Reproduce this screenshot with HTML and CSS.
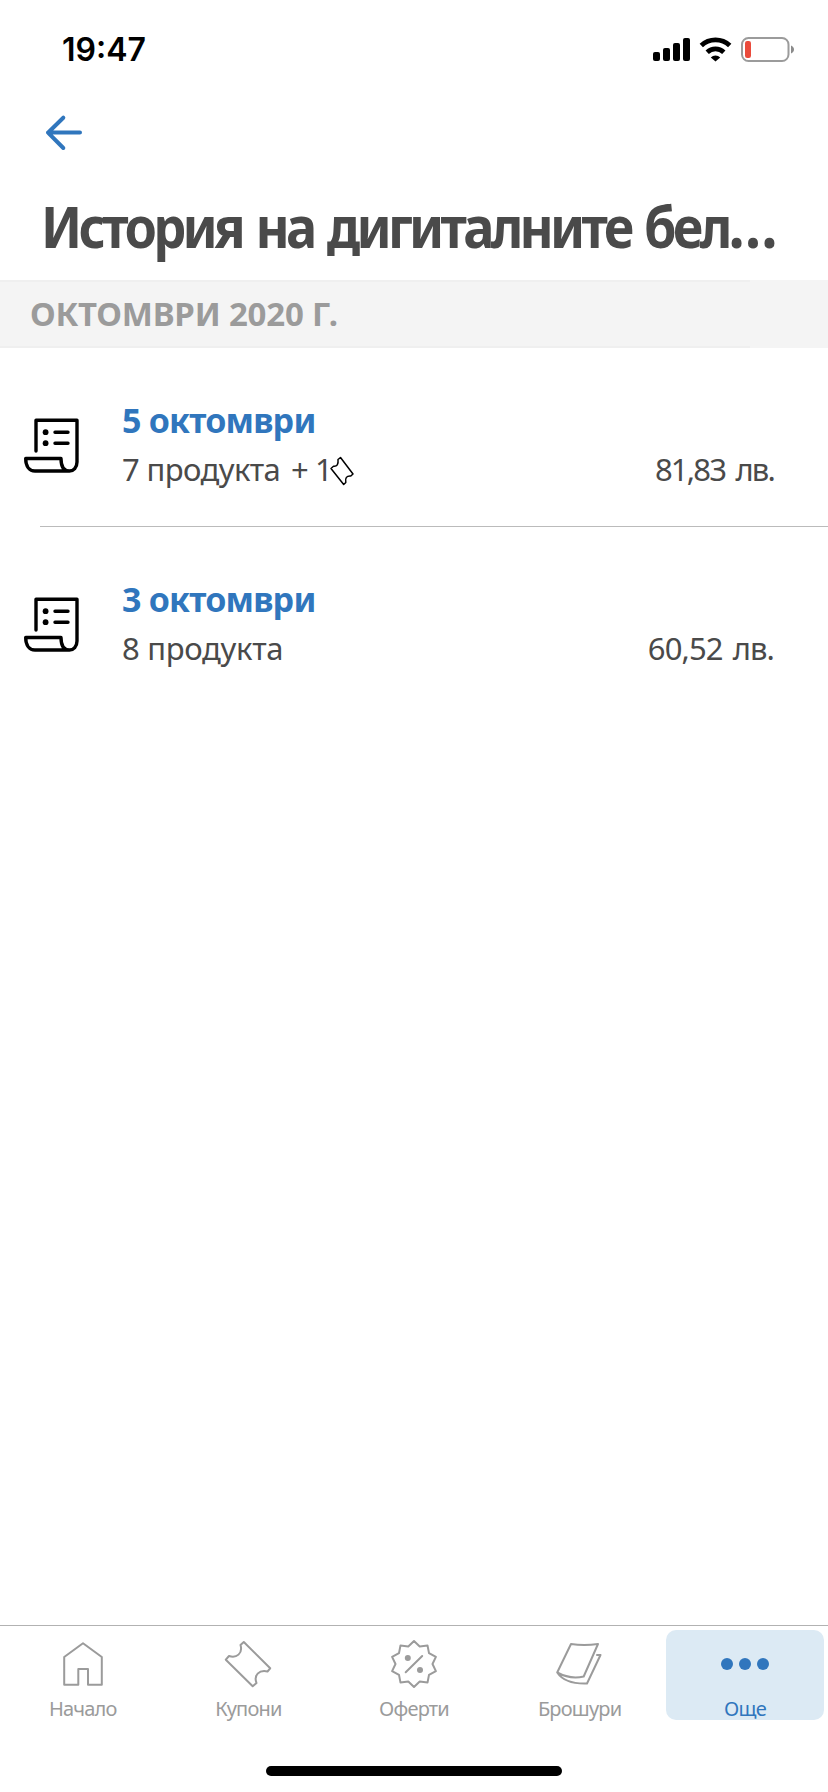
FILE: index.html
```
<!DOCTYPE html>
<html lang="bg">
<head>
<meta charset="utf-8">
<title>История на дигиталните бележки</title>
<link rel="stylesheet" href="styles.css">
</head>
<body>
<svg class="defs" width="0" height="0" aria-hidden="true">
  <symbol id="receipt" viewBox="20 414 62 62">
    <g fill="none" stroke="#000" stroke-width="3.4" stroke-linecap="round" stroke-linejoin="round">
      <path d="M36 451V420.300H77V462C77 467.500 73.500 471 69.500 471H35C29.500 471 25.700 466.500 25.700 458.500H61C61 466 63 471 69.500 471"/>
      <path d="M55 432.200H68M55 443.200H68"/>
    </g>
    <circle cx="45.600" cy="432.200" r="2.900"/><circle cx="45.600" cy="443.200" r="2.900"/>
  </symbol>
</svg>
<div class="screen">
  <header class="status">
    <span class="time">19:47</span>
    <svg class="indicators" width="146" height="32" viewBox="650 34 146 32">
      <rect x="653" y="52" width="7" height="9" rx="2"/><rect x="663" y="48" width="7" height="13" rx="2"/><rect x="673" y="43" width="7" height="18" rx="2"/><rect x="683" y="38" width="7" height="23" rx="2"/>
      <g fill="none" stroke="#000" stroke-width="4.800"><path d="M701.300 45.600a20.500 20.500 0 0 1 28.400 0"/><path d="M707.200 52.300a12 12 0 0 1 16.600 0"/></g>
      <path d="M710.800 57.400a6.600 6.600 0 0 1 9.400 0L715.500 61.500Z"/>
      <rect x="742" y="38" width="46.500" height="23" rx="6.500" fill="none" stroke="#9b9b9b" stroke-width="2"/>
      <rect x="745" y="41" width="6" height="17" rx="2.200" fill="#ea4b3c"/>
      <path d="M791 45.500c4 1.500 4 6.500 0 8z" fill="#8b8b8b"/>
    </svg>
  </header>
  <nav class="nav">
    <svg width="40" height="38" viewBox="44 114 40 38"><path d="M63.300 117.700L48 132.700L63.300 148M48 132.600H80" fill="none" stroke="#3076bd" stroke-width="4" stroke-linecap="round" stroke-linejoin="round"/></svg>
  </nav>
  <h1 class="title"><span>История на дигиталните бел<i class="more">…</i></span></h1>
  <h2 class="month">ОКТОМВРИ 2020 Г.</h2>
  <ul class="list">
    <li class="row">
      <svg class="receipt"><use href="#receipt"/></svg>
      <div class="info">
        <div class="date">5 октомври</div>
        <div class="line">
          <span class="count">7 продукта</span><span class="plus">+</span><span class="one">1</span>
          <svg class="mini" width="26" height="32" viewBox="329 455 26 32"><path d="M331 468.500L333.500 466.300Q338.800 467 338 459.500L340.500 457.500L353 474L350.800 476Q344.500 475.500 345.800 482.500L343.700 484.500Z" fill="none" stroke="#000" stroke-width="1.500" stroke-linejoin="round"/></svg>
          <span class="price">81,83 лв.</span>
        </div>
      </div>
    </li>
    <li class="row">
      <svg class="receipt"><use href="#receipt"/></svg>
      <div class="info">
        <div class="date">3 октомври</div>
        <div class="line"><span class="count wide">8 продукта</span><span class="price wide">60,52 лв.</span></div>
      </div>
    </li>
  </ul>
  <footer class="bottom">
    <div class="tabs">
      <a class="tab"><svg width="50" height="50" viewBox="58 1639 50 50"><path d="M83 1643.200L64.200 1657V1684.800H78.300V1669H88V1684.800H101.800V1657Z"/></svg><span>Начало</span></a>
      <a class="tab"><svg width="50" height="50" viewBox="223 1639 50 50"><path d="M243.800 1642L270.200 1668.300L267.500 1671.500C259 1669.500 253.500 1675.500 256.500 1683L252.700 1686.200L225.800 1659.700L229 1656C236.500 1658.500 243 1653.500 240.500 1645Z"/></svg><span>Купони</span></a>
      <a class="tab"><svg width="50" height="50" viewBox="-25 -25 50 50"><path d="M0-23L5.700-17.600L13.500-18.600L15-10.900L21.900-7.100L18.500 0L21.900 7.100L15 10.900L13.500 18.600L5.700 17.600L0 23L-5.700 17.600L-13.500 18.600L-15 10.900L-21.900 7.100L-18.500 0L-21.900-7.100L-15-10.900L-13.500-18.600L-5.700-17.600Z"/><path d="M-8.300 8.200L8.200-8"/><circle class="dot" cx="-6.200" cy="-6" r="3"/><circle class="dot" cx="6" cy="6" r="3"/></svg><span>Оферти</span></a>
      <a class="tab"><svg width="50" height="50" viewBox="554.500 1639 50 50"><path d="M570.500 1644Q583.500 1646 597.500 1644L583.200 1676.500Q569.500 1679.500 556.700 1672.500ZM556.700 1672.500C562 1680.500 572 1684 586.500 1683.500L600 1655H596.500"/></svg><span>Брошури</span></a>
      <a class="tab active"><svg width="50" height="50" viewBox="720 1639 50 50"><circle class="dot" cx="727" cy="1664" r="6"/><circle class="dot" cx="745" cy="1664" r="6"/><circle class="dot" cx="763" cy="1664" r="6"/></svg><span>Още</span></a>
    </div>
    <div class="home"></div>
  </footer>
</div>
</body>
</html>
```
FILE: styles.css
```
* { box-sizing: border-box; margin: 0; padding: 0; }
body { background: #fff; font-family: "Noto Sans", sans-serif; color: #4a4a4a; }
.defs { display: block; height: 0; }
.screen { width: 828px; height: 1792px; display: flex; flex-direction: column; overflow: hidden; }
.status { height: 100px; padding: 0 32px 0 62px; display: flex; justify-content: space-between; align-items: center; }
.time { font: 600 32px/40px Inter, sans-serif; color: #000; }
.nav { height: 80px; padding: 14px 44px; }
.nav svg { display: block; }
.title { width: 828px; height: 100px; padding-left: 41px; font-size: 58px; line-height: 92px; white-space: nowrap; }
.title span { display: inline-block; letter-spacing: -4.1px; word-spacing: 4px; transform: scaleX(.9); transform-origin: left; }
.more { font-style: normal; font-size: 64px; line-height: 1; letter-spacing: 0; }
.month { height: 68px; padding-left: 30px; background: linear-gradient(#efefef 2px, #f4f4f4 2px 66px, #efefef 66px) 0 0 / 750px 68px no-repeat #f4f4f4; color: #9b9b9b; font-size: 33px; line-height: 67px; letter-spacing: -.2px; }
.list { list-style: none; flex: 1; }
.row { height: 179px; display: flex; padding-left: 20px; }
.row:first-child { background: linear-gradient(#bbb, #bbb) 40px 178px / 100% 1px no-repeat; }
.receipt { width: 62px; height: 62px; margin: 66px 40px 0 0; }
.info { flex: 1; padding: 48px 54px 0 0; }
.date { height: 48px; color: #3076bd; font-weight: 700; font-size: 34px; line-height: 48px; letter-spacing: -.8px; }
.line { display: flex; font-size: 31px; line-height: 50px; }
.count { width: 169px; letter-spacing: -.6px; }
.count.wide { letter-spacing: -.3px; }
.plus { width: 24px; }
.one { width: 14px; }
.mini { margin-top: 11px; }
.price { margin-left: auto; letter-spacing: -1.8px; word-spacing: 4px; }
.price.wide { letter-spacing: -.9px; word-spacing: 3px; }
.bottom { height: 167px; border-top: 1px solid #b2b2b2; }
.tabs { display: flex; padding-top: 4px; }
.tab { width: 20%; height: 90px; padding-top: 9px; text-align: center; font-size: 20px; line-height: 24px; letter-spacing: -.8px; color: #9b9b9b; }
.tab svg { display: block; margin: 0 auto 8px; fill: none; stroke: currentColor; stroke-width: 2; stroke-linejoin: round; stroke-linecap: round; overflow: visible; }
.tab .dot { fill: currentColor; stroke: none; }
.tab.active { width: 158px; margin-left: 3.600px; border-radius: 10px; background: #dceaf4; color: #3076bd; }
.home { width: 296px; height: 10px; margin: 46px auto 0; border-radius: 5px; background: #000; }
```
